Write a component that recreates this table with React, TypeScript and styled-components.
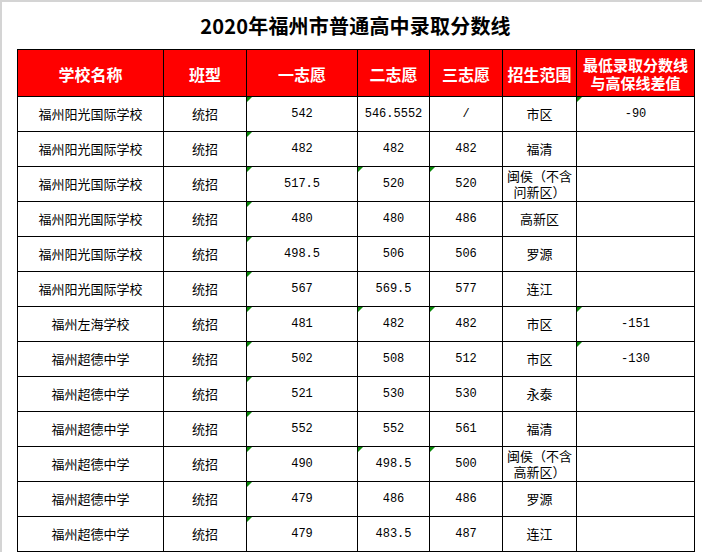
import React from "react";
import styled, { createGlobalStyle } from "styled-components";

const GlobalStyle = createGlobalStyle`
  body {
    margin: 0;
    background: #fff;
    font-family: "Noto Sans CJK SC", sans-serif;
    color: #000;
  }
`;

const Frame = styled.div`
  box-sizing: border-box;
  width: 702px;
  height: 552px;
  border-top: 2px solid #d4d4d4;
  border-left: 2px solid #d4d4d4;
  padding-left: 15px;
  overflow: hidden;
`;

const Title = styled.div`
  width: 677px;
  height: 47px;
  display: flex;
  align-items: center;
  justify-content: center;
  font-size: 20px;
  font-weight: 700;
  letter-spacing: 0.2px;
`;

const Table = styled.table`
  width: 677px;
  border-collapse: collapse;
  table-layout: fixed;
  border: 1px solid #000;
`;

const HeadCell = styled.th<{ $tight?: boolean }>`
  height: 44px;
  padding: 2px 0 0;
  background: #ff0000;
  color: #fff;
  font-size: ${(p) => (p.$tight ? "15px" : "16px")};
  font-weight: 700;
  line-height: 18px;
  text-align: center;
  border: 1px solid #000;
  white-space: nowrap;
`;

const Cell = styled.td<{ $num?: boolean }>`
  position: relative;
  height: 34px;
  padding: 0 3px;
  font-family: ${(p) =>
    p.$num ? `"Liberation Mono", monospace` : `"Noto Sans CJK SC", sans-serif`};
  font-size: ${(p) => (p.$num ? "12px" : "13px")};
  line-height: 16px;
  text-align: center;
  border: 1px solid #000;
`;

const Flag = styled.span`
  position: absolute;
  left: 0;
  top: 0;
  width: 0;
  height: 0;
  border-top: 5px solid #0a8a0a;
  border-right: 5px solid transparent;
`;

const widths = [146, 83, 111, 72, 73, 74, 118];

type Row = { cells: string[]; flags: number[] };

const rows: Row[] = [
  { cells: ["福州阳光国际学校", "统招", "542", "546.5552", "/", "市区", "-90"], flags: [2, 6] },
  { cells: ["福州阳光国际学校", "统招", "482", "482", "482", "福清", ""], flags: [2] },
  { cells: ["福州阳光国际学校", "统招", "517.5", "520", "520", "闽侯（不含问新区）", ""], flags: [2, 3, 4] },
  { cells: ["福州阳光国际学校", "统招", "480", "480", "486", "高新区", ""], flags: [2] },
  { cells: ["福州阳光国际学校", "统招", "498.5", "506", "506", "罗源", ""], flags: [2] },
  { cells: ["福州阳光国际学校", "统招", "567", "569.5", "577", "连江", ""], flags: [2] },
  { cells: ["福州左海学校", "统招", "481", "482", "482", "市区", "-151"], flags: [2, 3, 4, 6] },
  { cells: ["福州超德中学", "统招", "502", "508", "512", "市区", "-130"], flags: [2, 6] },
  { cells: ["福州超德中学", "统招", "521", "530", "530", "永泰", ""], flags: [2] },
  { cells: ["福州超德中学", "统招", "552", "552", "561", "福清", ""], flags: [2] },
  { cells: ["福州超德中学", "统招", "490", "498.5", "500", "闽侯（不含高新区）", ""], flags: [2, 3, 4] },
  { cells: ["福州超德中学", "统招", "479", "486", "486", "罗源", ""], flags: [2] },
  { cells: ["福州超德中学", "统招", "479", "483.5", "487", "连江", ""], flags: [2] },
];

const numCols = [2, 3, 4, 6];

export default function App() {
  return (
    <>
      <GlobalStyle />
      <Frame>
        <Title>2020年福州市普通高中录取分数线</Title>
        <Table>
          <colgroup>
            {widths.map((w, i) => (
              <col key={i} style={{ width: w }} />
            ))}
          </colgroup>
          <thead>
            <tr>
              <HeadCell>学校名称</HeadCell>
              <HeadCell>班型</HeadCell>
              <HeadCell>一志愿</HeadCell>
              <HeadCell>二志愿</HeadCell>
              <HeadCell>三志愿</HeadCell>
              <HeadCell>招生范围</HeadCell>
              <HeadCell $tight>
                最低录取分数线
                <br />
                与高保线差值
              </HeadCell>
            </tr>
          </thead>
          <tbody>
            {rows.map((row, r) => (
              <tr key={r}>
                {row.cells.map((c, i) => (
                  <Cell key={i} $num={numCols.includes(i)}>
                    {row.flags.includes(i) && <Flag />}
                    {c}
                  </Cell>
                ))}
              </tr>
            ))}
          </tbody>
        </Table>
      </Frame>
    </>
  );
}
